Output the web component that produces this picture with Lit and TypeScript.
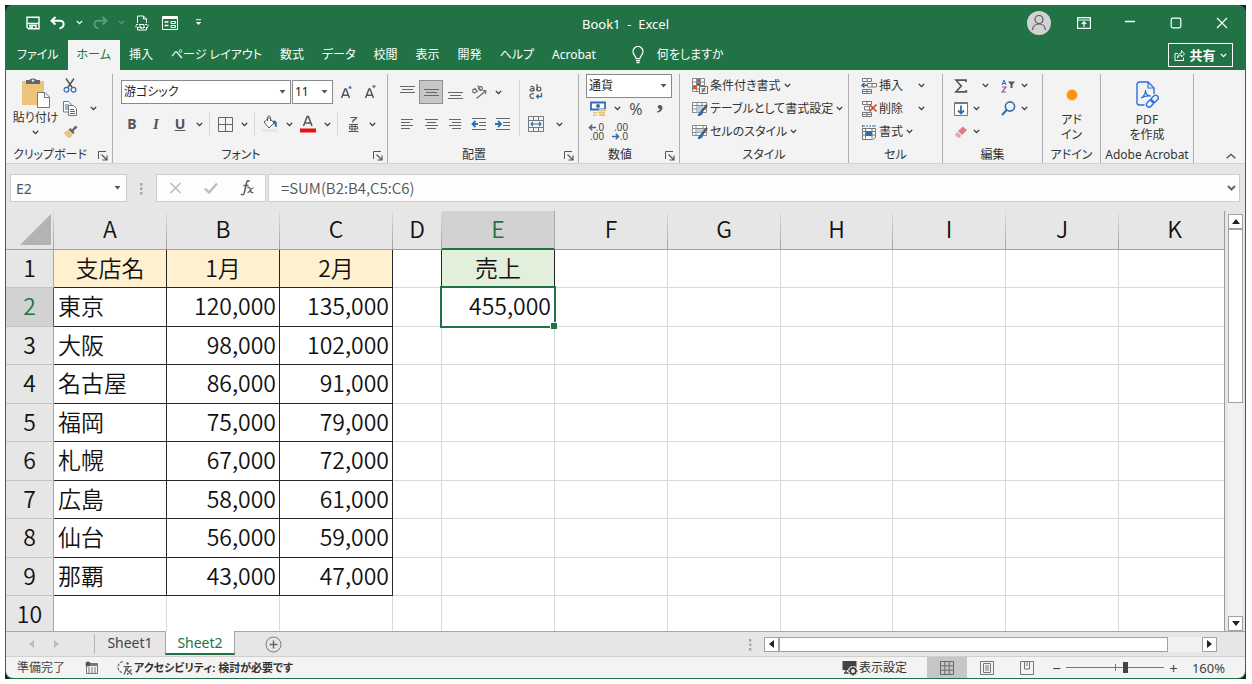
import { LitElement, html, svg, css, nothing, TemplateResult } from "lit";
import { customElement, property } from "lit/decorators.js";
import { classMap } from "lit/directives/class-map.js";

const B = "#2f6fb0";

const draw = (w: number, h: number, body: unknown) =>
  html`<svg width=${w} height=${h} viewBox="0 0 ${w} ${h}" fill="none" aria-hidden="true">${body}</svg>`;

const lines = (rows: number[][], colour = "#666") =>
  rows.map(([x1, x2, y]) => svg`<path d="M${x1} ${y}.5H${x2}" stroke=${colour}/>`);

const icons: Record<string, TemplateResult> = {
  chevron: draw(7, 5, svg`<path d="M.8 .9 3.5 3.6 6.2 .9" stroke="currentColor" stroke-width="1.3"/>`),
  arrow: draw(7, 4, svg`<path d="M.5 0h6L3.500 3.500z" fill="#555"/>`),
  save: draw(14, 14, svg`<path d="M1 1.200h12v11.600H2.500L1 11.300z" stroke="#fff" stroke-width="1.400"/><path d="M1.500 7.500h11M4 13V9.500h6V13" stroke="#fff" stroke-width="1.400"/><path d="M5 10.500h2V13H5z" fill="#fff"/>`),
  undo: draw(16, 14, svg`<path d="M5.500 1 1.500 4.700l4 3.800M2 4.700h7.500c5.500 0 5.500 6.300 0 7.800" stroke="#fff" stroke-width="2"/>`),
  redo: draw(16, 14, svg`<path d="m10.500 1 4 3.700-4 3.800M14 4.700H6.500C1 4.700 1 11 6.500 12.500" stroke="#5b9b78" stroke-width="2"/>`),
  print: draw(14, 16, svg`<path d="M2.500 8V1h6l3 3v4M8.500 1v3h3M2.500 13v2h9v-2" stroke="#fff"/><path d="M1 9.500h12v3H1z" stroke="#fff" stroke-dasharray="2 1"/><path d="M5 9.500h4v3.500H5z" stroke="#fff"/>`),
  form: draw(16, 14, svg`<path d="M.5.5h15v13H.5z" stroke="#fff"/><path d="M1 1h14v2H1z" fill="#fff"/><path d="M2.500 6h4M2.500 9.500h4" stroke="#fff" stroke-width="1.300"/><path d="M9 5.500h4.500v2H9zM9 9.500h4.500v2H9z" stroke="#fff"/>`),
  customize: draw(7, 7, svg`<path d="M1 .700h5" stroke="#fff"/><path d="M.8 3h5.400L3.500 6z" fill="#fff"/>`),
  person: draw(24, 24, svg`<circle cx="12" cy="12" r="12" fill="#d2d2d2"/><circle cx="12" cy="8.500" r="4" stroke="#555" stroke-width="1.200"/><path d="M5.500 19c.5-8 12.500-8 13 0" stroke="#555" stroke-width="1.200"/>`),
  ribbonMode: draw(14, 12, svg`<path d="M.6.600h12.800v10.800H.6zM.6 3h12.800M7 10V5M4.800 7 7 4.800 9.200 7" stroke="#fff" stroke-width="1.200"/>`),
  minimize: draw(12, 12, svg`<path d="M1 4.500h10" stroke="#fff" stroke-width="1.300"/>`),
  maximize: draw(12, 12, svg`<rect x="1.200" y="1.200" width="9.600" height="9.600" rx="1.500" stroke="#fff" stroke-width="1.200"/>`),
  close: draw(12, 12, svg`<path d="m1 1 10 10M11 1 1 11" stroke="#fff" stroke-width="1.200"/>`),
  bulb: draw(12, 18, svg`<path d="M4 12.500c0-2.500-3-3.500-3-7a5 5 0 0 1 10 0c0 3.500-3 4.500-3 7z" stroke="#fff" stroke-width="1.200"/><path d="M4 14.500h4M4.500 16.500h3" stroke="#fff" stroke-width="1.300"/>`),
  share: draw(11, 12, svg`<path d="M4 4.500H1v7h8.500V8.500" stroke="#fff"/><path d="M3.500 9c.2-3 1.700-5 4-5V1.500L10.500 5l-3 3V6C6 6 4.500 7 3.500 9z" stroke="#fff" stroke-width=".9"/>`),
  paste: draw(28, 30, svg`<path d="M0 3h22v24H0z" fill="#edc379"/><path d="M4 2h3.500C8 0 14 0 14.500 2H18v4H4z" fill="#666"/><circle cx="11" cy="2.600" r="1.200" fill="#f3f3f3"/><path d="M15.500 14.500h7.500l4.500 4.500v10.500h-12z" fill="#fff" stroke="#777"/><path d="M22.500 14.500v5h5" stroke="#777"/>`),
  cut: draw(14, 15, svg`<path d="M3 .500 9.500 10M11 .500 4.500 10" stroke="#555" stroke-width="1.500"/><circle cx="3.500" cy="11.700" r="2.400" stroke="${B}" stroke-width="1.200"/><circle cx="10.500" cy="11.700" r="2.400" stroke="${B}" stroke-width="1.200"/>`),
  copy: draw(14, 15, svg`<path d="M.5.500h5l2.500 2.500v8H.5z" fill="#fff" stroke="#777"/><path d="M2 4h4M2 6h4M2 8h4" stroke="${B}"/><path d="M5.500 4.500h5l3 3v7h-8z" fill="#fff" stroke="#777"/><path d="M7 8.500h4M7 10.500h5M7 12.500h5" stroke="${B}"/>`),
  brush: draw(15, 14, svg`<path d="m1 7.500 4-2.500 4.500 4.500L7 13.500c-2.500-1-5-3-6-6z" fill="#edc379"/><path d="m5.500 4.500 2-1.500L9 4.500 12.500.500 14.500 2.500 10.500 6l1 1.500-1.500 1.500z" fill="#666"/>`),
  border: draw(15, 15, svg`<path d="M.5.500h14v14H.5zM7.500.500v14M.5 7.500h14" stroke="#666"/>`),
  fill: draw(18, 18, svg`<path d="m3 7 5-4.500L13 8l-5 5z" fill="#fff" stroke="#555"/><path d="M6.500 6V2.500C6.500.500 9.500.500 9.500 2.500V6" stroke="#555"/><path d="M12.500 6c3-.5 3.500 2 2.500 6-1-1.500-1-3-2.500-6z" fill="${B}" stroke="${B}"/><path d="M1 14h16v3H1z" fill="#dff0d8"/>`),
  fontColor: draw(18, 18, svg`<path d="M4.500 11 8.200 1.500h1.200L13 11M5.800 8h6" stroke="#555" stroke-width="1.500"/><path d="M1 13.500h16v4H1z" fill="#e8110f"/>`),
  ruby: draw(11, 16, svg`<path d="M2.500 1.500h6L6 4.500M5.500 3.500 4.500 6.500" stroke="#555" stroke-width="1.200"/><path d="M1 8.500h9M.5 15.500h10M4 8.500v7M7 8.500v7M1.500 10.500v2.500h8v-2.500z" stroke="#555"/>`),
  grow: draw(14, 14, svg`<path d="M1.500 13 5 4h1l3.500 9M2.800 10.200h5.400" stroke="#555" stroke-width="1.500"/><path d="M8 3.500 10 .500l2 3z" fill="${B}"/>`),
  shrink: draw(14, 14, svg`<path d="M1.500 13 5 4h1l3.500 9M2.800 10.200h5.400" stroke="#555" stroke-width="1.500"/><path d="M8 .500h4l-2 3z" fill="${B}"/>`),
  alignTop: draw(15, 15, lines([[0, 15, 1], [2, 13, 4], [0, 15, 7]])),
  alignMiddle: draw(15, 15, lines([[0, 15, 4], [2, 13, 7], [0, 15, 10]])),
  alignBottom: draw(15, 15, lines([[0, 15, 7], [2, 13, 10], [0, 15, 13]])),
  alignLeft: draw(12, 12, lines([[0, 12, 1], [0, 9, 4], [0, 12, 7], [0, 9, 10]])),
  alignCenter: draw(13, 12, lines([[0, 13, 1], [2, 11, 4], [0, 13, 7], [2, 11, 10]])),
  alignRight: draw(12, 12, lines([[0, 12, 1], [3, 12, 4], [0, 12, 7], [3, 12, 10]])),
  orient: draw(16, 16, svg`<g stroke="#666" stroke-width="1.100"><circle cx="3.500" cy="7" r="1.900"/><path d="m3.500 4 3.200 4M6.500 1.500l3.500 5.200"/><circle cx="9.500" cy="4.500" r="1.900"/><path d="m5.500 14.500 9-7.500M11.500 6.500l3.300.2-.3 3.500"/></g>`),
  wrap: draw(14, 16, svg`<g stroke="#555" stroke-width="1.200"><path d="M1.500 3c1-.8 3.500-.8 3.500 1v3.200M5 4.700C3 4.500 1 4.700 1 6s2.500 1.500 4 0M8 0v7.200"/><circle cx="10" cy="4.900" r="1.900"/><path d="M5 10C2.500 8.800 1 10.500 1 12c0 1.700 1.500 3.200 4 2"/></g><path d="M12.500 9v3.500H7.500M9.500 10.500l-2 2 2 2" stroke="${B}" stroke-width="1.300"/>`),
  outdent: draw(16, 14, svg`${lines([[1, 15, 1], [8, 15, 5], [8, 15, 8], [1, 15, 12]])}<path d="M7 7H2M4.500 4 1.500 7l3 3" stroke="${B}" stroke-width="1.800"/>`),
  indent: draw(16, 14, svg`${lines([[1, 15, 1], [8, 15, 5], [8, 15, 8], [1, 15, 12]])}<path d="M0 7h5M3 4l3 3-3 3" stroke="${B}" stroke-width="1.800"/>`),
  merge: draw(16, 16, svg`<path d="M.5.500h15v15H.5zM.5 4.500h15M.5 11.500h15M5.500.500v4M10.500.500v4M5.500 11.500v4M10.500 11.500v4" stroke="#777"/><path d="M3 8h10M5 6 3 8l2 2M11 6l2 2-2 2" stroke="${B}" stroke-width="1.200"/>`),
  currency: draw(17, 16, svg`<path d="M1 1.500h14v7H1z" fill="#fff" stroke="${B}" stroke-width="1.800"/><circle cx="8" cy="5" r="2" fill="${B}"/><path d="M9 8h7v2H9zM8 10.500h7v2H8zM9 13h6v2H9zM3 11h4v1.500H3zM3 13.500h4V15H3z" fill="#edc379"/>`),
  toLeft: draw(8, 7, svg`<path d="M8 3.500H2M4.200.800 1.500 3.500l2.700 2.700" stroke="${B}" stroke-width="1.600"/>`),
  toRight: draw(8, 7, svg`<path d="M0 3.500h6M3.800.800l2.700 2.700-2.700 2.700" stroke="${B}" stroke-width="1.600"/>`),
  condition: draw(16, 16, svg`<path d="M.5.500h12v13H.5zM.5 4h12M.5 7.500h12M.5 11h12M4.500.500v13M8.500.500v13" fill="#fff" stroke="#888"/><path d="M5 1h3v3H5zM1 8h4v3H1z" fill="#d65532"/><path d="M5 4.500h3v3H5z" fill="${B}"/><path d="M7.500 8.500h8v7h-8z" fill="#fff" stroke="#666"/><path d="M9.500 11h4M9.500 13h4M13 9.500l-3 5" stroke="#555"/>`),
  tableFormat: draw(16, 16, svg`<path d="M.5 1.500h14v10H.5zM.5 4.500h14M.5 8h14M5 1.500v10M10 1.500v10" fill="#fff" stroke="#888"/><path d="M5 5h5v3H5zM5 8.500h4v3H5z" fill="#b7d1ea"/><path d="M15 4 9 11.500" stroke="#555" stroke-width="2.200"/><path d="M9.500 10c-2 .3-3 2-4 5 3 .5 5-1 5.700-3.500z" fill="${B}"/>`),
  cellStyle: draw(16, 16, svg`<path d="M.5 1.500h14v10H.5zM.5 4.500h14M.5 8.500h14M4 1.500v10M11 1.500v10" fill="#fff" stroke="#888"/><path d="M4.500 5h6v3.500h-6z" fill="#b7d1ea"/><path d="M15 4 9 11.500" stroke="#555" stroke-width="2.200"/><path d="M9.500 10c-2 .3-3 2-4 5 3 .5 5-1 5.700-3.500z" fill="${B}"/>`),
  insert: draw(16, 16, svg`<path d="M1.500.500h9v3h-9zM6 .500v3M1.500 11.500h9v4h-9zM1.500 13.500h9M6 11.500v4M6.500 5.500h9v3.500h-9zM11 5.500v3.500" fill="#fff" stroke="#777"/><path d="M7 7.300H1.500M3.500 5 1 7.300l2.500 2.200" stroke="${B}" stroke-width="1.500"/>`),
  remove: draw(16, 16, svg`<path d="M1.500.500h9v3h-9zM6 .500v3M1.500 11.500h9v4h-9zM1.500 13.500h9M6 11.500v4M3.500 5.500h5v3.500h-5z" fill="#fff" stroke="#777"/><path d="m8.500 3.500 7 7M15.500 3.500l-7 7" stroke="#d04a23" stroke-width="1.700"/>`),
  format: draw(16, 16, svg`<path d="M1.500 1v2M14 1v2M2 2h12" stroke="${B}" stroke-dasharray="2 1"/><path d="M1.500 4.500h13v9l-3 2h-10zM1.500 7.500h13M1.500 11h13M4.500 4.500v10M11 4.500v10" fill="#fff" stroke="#777"/><path d="M5 7.500h6V12H5z" fill="${B}"/>`),
  sum: draw(14, 14, svg`<path d="M12 3V1.200H2L7.200 7 2 12.800h10.300V11" stroke="#555" stroke-width="1.700"/>`),
  sort: draw(15, 14, svg`<path d="M1 6 3 1l2 5M1.600 4.500h2.800" stroke="${B}"/><path d="M1 8h4l-4 5h4" stroke="#8a4fa8" stroke-width="1.200"/><path d="M7 2.500h7l-2.500 3V9h-2V5.500z" fill="#555"/>`),
  fillDown: draw(14, 14, svg`<path d="M.5.500h13v13H.5z" fill="#fff" stroke="#777"/><path d="M.5 1.500h13" stroke="#777"/><path d="M7 3.500v8M4 8.500l3 3 3-3" stroke="${B}" stroke-width="1.800"/>`),
  find: draw(15, 15, svg`<circle cx="9" cy="5.500" r="4.600" stroke="${B}" stroke-width="1.600"/><path d="M5.700 9 1 14" stroke="${B}" stroke-width="2"/>`),
  eraser: draw(14, 14, svg`<path d="M9 1.500 13 5l-5 5-4-4z" fill="#e3798d"/><path d="m3.300 6.700 4 4-1.800 2H3.800L1 10z" fill="#eaa0ae"/>`),
  dot: draw(14, 14, svg`<circle cx="7" cy="7" r="5.800" fill="#ffc46b"/><circle cx="7" cy="7" r="5" fill="#ff9311"/>`),
  pdf: draw(26, 28, svg`<g stroke="#2b6be4" stroke-width="1.400"><path d="M10.500 24H5.500C4 24 3 23 3 21.500v-18C3 2 4 1 5.500 1H14l6 6v6"/><path d="M14 1v6h6" stroke-width="1.200"/><path d="M7 17c3.500-2 4.500-5 4.500-8 0 4 2 6 5.500 6-3.500-.5-6.500 0-10 2z" stroke-width="1.100"/><g transform="rotate(-45 18.500 20)"><rect x="11" y="17.400" width="8" height="5.200" rx="2.600"/><rect x="17.500" y="17.400" width="8" height="5.200" rx="2.600"/></g></g>`),
  launcher: draw(10, 10, svg`<path d="M.5 8V.500H8" stroke="#555"/><path d="m3.500 3.500 5 5M9 4.500V9H4.500" stroke="#555" stroke-width="1.200"/>`),
  collapse: draw(10, 6, svg`<path d="m.7 5.300 4.300-4 4.300 4" stroke="#444" stroke-width="1.200"/>`),
  grip: draw(3, 13, svg`<path d="M0 1h2.400v2.400H0zM0 5.500h2.400v2.400H0zM0 10h2.400v2.400H0z" fill="#a5a5a5"/>`),
  cancel: draw(13, 12, svg`<path d="m1.500 1 10 10M11.500 1l-10 10" stroke="#bdbdbd" stroke-width="1.600"/>`),
  accept: draw(14, 12, svg`<path d="m1 6.500 4 4L13 1.500" stroke="#bdbdbd" stroke-width="2.400"/>`),
  fx: draw(15, 18, svg`<path d="M9.500 2.500C8.500 1 7 1.500 6.500 4L4.500 13c-.5 3-2 3.500-3.500 2M3.500 6.500h5" stroke="#5a5a5a" stroke-width="1.500"/><path d="M7.500 9c2-1.500 2.500 0 3 2.200s1 3.300 2.800 2M13.500 8.800c-2-.8-4 5.500-6 4.700" stroke="#5a5a5a" stroke-width="1.200"/>`),
  expand: draw(9, 6, svg`<path d="m1 1 3.500 3.500L8 1" stroke="#666" stroke-width="2"/>`),
  up: draw(8, 5, svg`<path d="M0 5h8L4 0z" fill="#222"/>`),
  down: draw(8, 5, svg`<path d="M0 0h8L4 5z" fill="#222"/>`),
  left: draw(5, 8, svg`<path d="M5 0v8L0 4z" fill="currentColor"/>`),
  right: draw(5, 8, svg`<path d="M0 0v8l5-4z" fill="currentColor"/>`),
  corner: draw(31, 31, svg`<path d="M31 0v31H0z" fill="#b3b3b3"/>`),
  add: draw(17, 17, svg`<circle cx="8.500" cy="8.500" r="7.500" stroke="#777"/><path d="M8.500 4.500v8M4.500 8.500h8" stroke="#666" stroke-width="1.400"/>`),
  macro: draw(13, 13, svg`<path d="M1.500 2.500h11v10h-11z" stroke="#777"/><path d="M5 3h7v2H5z" fill="#777"/><path d="M3 7h2M6 7h2M9 7h2M3 9h2M6 9h2M9 9h2M3 11h2M6 11h2M9 11h2" stroke="#777"/><circle cx="3" cy="3" r="2.500" fill="#555"/>`),
  access: draw(17, 15, svg`<path d="M6 1.500C-.5 3-.5 11 5 12.500" stroke="#666" stroke-width="1.200" stroke-dasharray="3 1.200"/><circle cx="10.500" cy="3.500" r="1.200" fill="#555"/><path d="M6.500 6.500h8M9 6.500v3.500l-2 4.500M12 6.500 9.500 10M10 10l5 4.500M14.500 9.500 10 14.500" stroke="#555" stroke-width="1.200"/>`),
  display: draw(17, 16, svg`<path d="M1.500 1h14v9h-14z" fill="#444"/><path d="M3 13h5M5 10v3" stroke="#444" stroke-width="1.500"/><circle cx="12" cy="11" r="5" fill="#f3f3f3"/><circle cx="12" cy="11" r="2.800" stroke="#444" stroke-width="1.700"/><path d="M12 6.500v2M12 13.500v2M7.500 11h2M14.500 11h2M9 8l1 1M14 13l1 1M15 8l-1 1M10 13l-1 1" stroke="#444" stroke-width="1.400"/>`),
  viewNormal: draw(14, 14, svg`<path d="M.5.500h13v13H.5zM.5 4.800h13M.5 9.200h13M4.800.500v13M9.200.500v13" stroke="#6a6a6a"/>`),
  viewPage: draw(14, 14, svg`<path d="M.5.500h13v13H.5zM3.500 2.500h7v9h-7zM5 5h4M5 7h4M5 9h4" stroke="#777"/>`),
  viewBreak: draw(14, 14, svg`<path d="M.5.500h13v13H.5zM4.500.500V8h5V.500M7 .500V5" stroke="#777"/>`),
};

const base = css`
  * { box-sizing: border-box; }
  svg { display: block; flex: none; }
  button, select, input {
    margin: 0; padding: 0; border: 0; background: none; border-radius: 0;
    color: inherit; font: inherit; font-feature-settings: inherit; appearance: none; outline: none;
  }
  button { display: flex; align-items: center; justify-content: center; flex: none; white-space: nowrap; }
`;

@customElement("title-area")
class TitleArea extends LitElement {
  static styles = [base, css`
    :host { display: block; background: #217346; color: #fff; font-size: 12px; line-height: 16px; }
    .bar { display: grid; grid-template-columns: 1fr auto 1fr; height: 35px; align-items: center; }
    .quick { display: flex; align-items: center; padding-left: 16px; }
    .slot { width: 22px; height: 24px; }
    .slot.wide { width: 28px; }
    .drop { width: 14px; height: 24px; }
    .dim { color: #5b9b78; }
    .title { white-space: pre; padding-top: 3px; font-size: 13px; font-weight: 400; margin: 0; }
    .window { display: flex; align-items: center; justify-content: flex-end; }
    .window button { width: 46px; height: 28px; }
    .window .user { width: 24px; margin-right: 10px; }
    .tabs { display: flex; height: 30px; align-items: stretch; padding-left: 2px; }
    .tab { padding: 0 9px; color: #fff; text-decoration: none; display: flex; align-items: center; white-space: nowrap; }
    .tab.on { background: #f3f3f3; color: #217346; }
    .tell { margin-left: 27px; gap: 13px; }
    .share { margin: 3px 12px 3px auto; width: 65px; border: 1px solid #fff; font-weight: 700; font-size: 13px; gap: 4px; }
  `];

  render() {
    const tabs = ["ファイル", "ホーム", "挿入", "ページ レイアウト", "数式", "データ", "校閲", "表示", "開発", "ヘルプ", "Acrobat"];
    return html`
      <header class="bar">
        <div class="quick">
          <button class="slot" aria-label="上書き保存">${icons.save}</button>
          <button class="slot wide" aria-label="元に戻す">${icons.undo}</button>
          <button class="drop" aria-label="元に戻す一覧">${icons.chevron}</button>
          <button class="slot wide" aria-label="やり直し">${icons.redo}</button>
          <button class="drop dim" aria-label="やり直し一覧">${icons.chevron}</button>
          <button class="slot wide" aria-label="印刷プレビュー">${icons.print}</button>
          <button class="slot wide" aria-label="フォーム">${icons.form}</button>
          <button class="slot wide" aria-label="カスタマイズ">${icons.customize}</button>
        </div>
        <h1 class="title">Book1  -  Excel</h1>
        <div class="window">
          <button class="user" aria-label="アカウント">${icons.person}</button>
          <button aria-label="リボンの表示オプション">${icons.ribbonMode}</button>
          <button aria-label="最小化">${icons.minimize}</button>
          <button aria-label="最大化">${icons.maximize}</button>
          <button aria-label="閉じる">${icons.close}</button>
        </div>
      </header>
      <nav class="tabs">
        ${tabs.map((t, i) => html`<a href="#" class=${classMap({ tab: true, on: i === 1 })}>${t}</a>`)}
        <button class="tell">${icons.bulb}<span>何をしますか</span></button>
        <button class="share">${icons.share}<span>共有</span>${icons.chevron}</button>
      </nav>
    `;
  }
}

@customElement("ribbon-group")
class RibbonGroup extends LitElement {
  @property() label = "";
  @property({ type: Boolean }) launcher = false;
  static styles = [base, css`
    :host { display: grid; grid-template-rows: 69px 20px; border-right: 1px solid #b0b0b0; margin-top: 4px; min-width: 0; }
    .foot { display: flex; align-items: end; line-height: 16px; }
    .name { flex: 1; text-align: center; white-space: nowrap; }
    .open { width: 18px; height: 14px; }
  `];
  render() {
    return html`<slot></slot>
      <div class="foot"><span class="name">${this.label}</span>
      ${this.launcher ? html`<button class="open" aria-label="${this.label}の設定">${icons.launcher}</button>` : nothing}</div>`;
  }
}

@customElement("ribbon-bar")
class RibbonBar extends LitElement {
  static styles = [base, css`
    :host {
      display: grid; background: #f3f3f3; color: #333; font-size: 12px; line-height: 16px; height: 94px;
      grid-template-columns: 107px 275px 191px 101px 169px 94px 100px 58px 93px 1fr;
      border-bottom: 1px solid #d0d0d0;
    }
    .row { display: flex; align-items: center; height: 23px; }
    .two { display: flex; flex-direction: column; gap: 8px; padding: 6px 0 0 7px; }
    .two .row { height: 24px; }
    .two.flush { padding-left: 0; }
    .three { display: flex; flex-direction: column; padding-left: 7px; }
    .wide { padding-left: 12px; }
    .ic { width: 24px; height: 24px; }
    .ch { width: 14px; height: 20px; }
    .ch.far { width: 22px; }
    .on { background: #c6c6c6; border: 1px solid #8f8f8f; }
    .sep { width: 1px; height: 22px; margin: 0 3px; background: #d6d6d6; flex: none; }
    .sep.tall { height: 56px; margin: 6px 4px 0; }
    .cols { display: flex; }
    .bold { font-weight: 700; font-size: 14px; color: #555; }
    .italic { font: italic 700 15px/16px "Liberation Serif", serif; color: #555; }
    .under { font-weight: 700; text-decoration: underline; font-size: 14px; color: #555; }
    .pick { display: grid; align-items: center; background: #fff; border: 1px solid #8a8a8a; height: 24px; color: #222; }
    .pick select { grid-area: 1 / 1; width: 100%; padding-left: 2px; }
    .pick svg { grid-area: 1 / 1; justify-self: end; margin-right: 4px; pointer-events: none; }
    .family { width: 170px; }
    .size { width: 41px; margin-right: 2px; }
    .size, .pick.family { margin-left: 1px; }
    .number { width: 86px; }
    .item { gap: 2px; height: 22px; }
    .item .tail { margin-left: 1px; }
    .item .tail.far { margin-left: 13px; }
    .clip { display: grid; grid-template-columns: 45px 24px 1fr; padding-left: 7px; }
    .big { flex-direction: column; justify-content: start; padding-top: 4px; line-height: 15px; }
    .big .cap { margin-top: 2px; }
    .big .drop { margin-top: 5px; }
    .mid { display: flex; align-items: center; }
    .dec { font: 10px/9px "Liberation Sans", sans-serif; flex-direction: column; color: #444; align-items: end; width: 24px; padding-right: 6px; }
    .dec span { display: flex; align-items: center; }
    .percent { font-size: 16px; color: #555; }
    .comma { font: 700 26px/24px "Liberation Serif", serif; color: #555; width: 24px; height: 24px; padding-bottom: 16px; }
    .edit { display: grid; grid-template-columns: 24px 24px 22px 10px; grid-auto-rows: 23px; align-items: center; padding-left: 6px; }
    .edit button { width: auto; }
    .edit .near { justify-content: start; }
    .addin { width: 100%; }
    .addin .pic { height: 34px; display: flex; align-items: center; }
    .end { display: flex; justify-content: flex-end; align-items: end; padding: 0 6px 2px 0; }
    .end button { width: 16px; height: 10px; }
  `];

  private ic(name: string, label: string, on = false) {
    return html`<button class=${classMap({ ic: true, on })} aria-label=${label}>${icons[name]}</button>`;
  }
  private ch(far = false) {
    return html`<button class=${classMap({ ch: true, far })} aria-label="その他">${icons.chevron}</button>`;
  }
  private item(icon: string, text: string, far = false) {
    return html`<div class="row"><button class="item">${icons[icon]}<span>${text}</span><span class=${classMap({ tail: true, far })}>${icons.chevron}</span></button></div>`;
  }

  render() {
    return html`
      <ribbon-group label="クリップボード" launcher>
        <div class="clip">
          <button class="big">${icons.paste}<span class="cap">貼り付け</span><span class="drop">${icons.chevron}</span></button>
          <div>
            <div class="row">${this.ic("cut", "切り取り")}</div>
            <div class="row">${this.ic("copy", "コピー")}</div>
            <div class="row">${this.ic("brush", "書式のコピー")}</div>
          </div>
          <div class="mid">${this.ch(true)}</div>
        </div>
      </ribbon-group>
      <ribbon-group label="フォント" launcher>
        <div class="two">
          <div class="row">
            <label class="pick family"><select aria-label="フォント名"><option>游ゴシック</option></select>${icons.arrow}</label>
            <label class="pick size"><select aria-label="フォント サイズ"><option>11</option></select>${icons.arrow}</label>
            ${this.ic("grow", "拡大")}${this.ic("shrink", "縮小")}
          </div>
          <div class="row">
            <button class="ic bold">B</button><button class="ic italic">I</button><button class="ic under">U</button>${this.ch()}
            <span class="sep"></span>${this.ic("border", "罫線")}${this.ch()}
            <span class="sep"></span>${this.ic("fill", "塗りつぶしの色")}${this.ch()}${this.ic("fontColor", "フォントの色")}${this.ch()}
            <span class="sep"></span>${this.ic("ruby", "ふりがな")}${this.ch()}
          </div>
        </div>
      </ribbon-group>
      <ribbon-group label="配置" launcher>
        <div class="cols">
          <div class="two">
            <div class="row">${this.ic("alignTop", "上揃え")}${this.ic("alignMiddle", "上下中央揃え", true)}${this.ic("alignBottom", "下揃え")}${this.ic("orient", "方向")}${this.ch()}</div>
            <div class="row">${this.ic("alignLeft", "左揃え")}${this.ic("alignCenter", "中央揃え")}${this.ic("alignRight", "右揃え")}${this.ic("outdent", "インデントを減らす")}${this.ic("indent", "インデントを増やす")}</div>
          </div>
          <span class="sep tall"></span>
          <div class="two flush">
            <div class="row">${this.ic("wrap", "折り返し")}</div>
            <div class="row">${this.ic("merge", "セルを結合")}${this.ch(true)}</div>
          </div>
        </div>
      </ribbon-group>
      <ribbon-group label="数値" launcher>
        <div class="three">
          <div class="row"><label class="pick number"><select aria-label="表示形式"><option>通貨</option></select>${icons.arrow}</label></div>
          <div class="row">${this.ic("currency", "通貨")}${this.ch()}<button class="ic percent">%</button><button class="comma">,</button></div>
          <div class="row"><button class="dec"><span>${icons.toLeft}.0</span><span>.00</span></button><button class="dec"><span>.00</span><span>${icons.toRight}.0</span></button></div>
        </div>
      </ribbon-group>
      <ribbon-group label="スタイル">
        <div class="three wide">
          ${this.item("condition", "条件付き書式")}${this.item("tableFormat", "テーブルとして書式設定")}${this.item("cellStyle", "セルのスタイル")}
        </div>
      </ribbon-group>
      <ribbon-group label="セル">
        <div class="three wide">
          ${this.item("insert", "挿入", true)}${this.item("remove", "削除", true)}${this.item("format", "書式")}
        </div>
      </ribbon-group>
      <ribbon-group label="編集">
        <div class="edit">
          <button aria-label="合計">${icons.sum}</button><button aria-label="合計一覧">${icons.chevron}</button>
          <button aria-label="並べ替え">${icons.sort}</button><button aria-label="並べ替え一覧">${icons.chevron}</button>
          <button aria-label="フィル">${icons.fillDown}</button><button class="near" aria-label="フィル一覧">${icons.chevron}</button>
          <button aria-label="検索">${icons.find}</button><button aria-label="検索一覧">${icons.chevron}</button>
          <button aria-label="クリア">${icons.eraser}</button><button class="near" aria-label="クリア一覧">${icons.chevron}</button>
        </div>
      </ribbon-group>
      <ribbon-group label="アドイン">
        <button class="big addin"><span class="pic">${icons.dot}</span><span>アド<br />イン</span></button>
      </ribbon-group>
      <ribbon-group label="Adobe Acrobat">
        <button class="big addin"><span class="pic">${icons.pdf}</span><span>PDF<br />を作成</span></button>
      </ribbon-group>
      <div class="end"><button aria-label="リボンを折りたたむ">${icons.collapse}</button></div>
    `;
  }
}

@customElement("formula-bar")
class FormulaBar extends LitElement {
  static styles = [base, css`
    :host { display: flex; align-items: start; background: #e6e6e6; height: 47px; padding: 10px 5px 0 4px; color: #555; font-size: 14px; }
    .box { display: flex; align-items: center; height: 28px; background: #fdfdfd; border: 1px solid #cdcdcd; }
    .name { width: 117px; padding: 0 5px; }
    .name input { flex: 1; min-width: 0; }
    .grip { height: 28px; width: 29px; display: grid; place-items: center; }
    .tools { width: 110px; margin-right: 2px; }
    .tools button { width: 36px; height: 26px; }
    .formula { flex: 1; padding: 0 3px 0 12px; }
    .formula input { flex: 1; min-width: 0; font-family: "Noto Sans CJK JP", sans-serif; font-size: 15px; line-height: 20px; font-weight: 350; }
  `];
  render() {
    return html`
      <div class="box name"><input aria-label="名前ボックス" .value=${"E2"} />${icons.arrow}</div>
      <span class="grip">${icons.grip}</span>
      <div class="box tools">
        <button aria-label="キャンセル">${icons.cancel}</button><button aria-label="入力">${icons.accept}</button><button aria-label="関数の挿入">${icons.fx}</button>
      </div>
      <div class="box formula"><input aria-label="数式" .value=${"=SUM(B2:B4,C5:C6)"} /><button aria-label="展開">${icons.expand}</button></div>
    `;
  }
}

const columns = ["A", "B", "C", "D", "E", "F", "G", "H", "I", "J", "K"];
const data = [
  ["支店名", "1月", "2月", "", "売上"],
  ["東京", "120,000", "135,000", "", "455,000"],
  ["大阪", "98,000", "102,000"],
  ["名古屋", "86,000", "91,000"],
  ["福岡", "75,000", "79,000"],
  ["札幌", "67,000", "72,000"],
  ["広島", "58,000", "61,000"],
  ["仙台", "56,000", "59,000"],
  ["那覇", "43,000", "47,000"],
  [],
];

@customElement("sheet-grid")
class SheetGrid extends LitElement {
  static styles = [base, css`
    :host { display: flex; flex: 1; min-height: 0; background: #e6e6e6; }
    .view { flex: 1; min-width: 0; overflow: hidden; border-right: 1px solid #9a9a9a; background: #fff; }
    table { width: calc(100% + 7px); table-layout: fixed; border-collapse: separate; border-spacing: 0;
      font: 350 23px/30px "Noto Sans CJK JP", sans-serif; font-feature-settings: normal; color: #111; }
    .rows { width: 48px; }
    .std { width: 113px; }
    .slim { width: 49px; }
    .snug { width: 112px; }
    th, td { padding: 0 0 4px; overflow: visible; white-space: nowrap; }
    th { font-weight: 350; background: #e6e6e6; text-align: center; border-bottom: 1px solid #c4c4c4; border-right: 1px solid #a6a6a6; }
    thead tr { height: 39px; }
    thead th { border-bottom-color: #9e9e9e; border-right: 1px solid; border-image: linear-gradient(#e0e0e0, #9e9e9e) 1; }
    .all { padding: 0 2px 1px 14px; }
    tbody tr { height: 39px; }
    tbody tr:nth-child(odd) { height: 38px; }
    td { border-right: 1px solid #d9d9d9; border-bottom: 1px solid #d9d9d9; }
    .framed { border-color: #262626; }
    .text { padding-left: 4px; }
    .num { text-align: right; padding-right: 3px; }
    .head { text-align: center; background: #fff0cf; }
    .total { background: #e2efda; }
    .edge { border-right-color: #262626; }
    th.chosen { background: #d2d2d2; color: #217346; }
    tbody th.chosen { border-right-color: #217346; }
    thead th.chosen { border-image: none; border-right-color: #aaa; border-bottom: 2px solid #217346; padding-bottom: 3px; }
    td.active { position: relative; }
    td.active::before { content: ""; position: absolute; inset: -2px -2px -2px -2px; border: 2px solid #217346; }
    td.active::after { content: ""; position: absolute; right: -3px; bottom: -3px; width: 6px; height: 6px; background: #217346; border: solid #fff; border-width: 1px 0 0 1px; }
    .scroll { width: 20px; padding: 3px 2px 0 3px; display: flex; flex-direction: column; }
    .scroll button { width: 15px; height: 15px; border: 1px solid #a2a2a2; background: #fff; }
    .track { flex: 1; background: #f1f1f1; display: flex; flex-direction: column; }
    .thumb { height: 45%; background: #fff; border: 1px solid #a2a2a2; }
  `];

  private cell(r: number, c: number) {
    const v = data[r][c] ?? "";
    const framed = r < 9 && c < 3;
    return html`<td class=${classMap({
      framed: framed || (r === 0 && c === 4),
      head: r === 0 && (c < 3 || c === 4),
      total: r === 0 && c === 4,
      text: r > 0 && c === 0,
      num: r > 0 && c > 0,
      edge: r === 0 && c === 3,
      active: r === 1 && c === 4,
    })}>${v}</td>`;
  }

  render() {
    return html`
      <div class="view">
        <table>
          <colgroup>
            <col class="rows" /><col class="std" /><col class="std" /><col class="std" /><col class="slim" /><col class="std" />
            <col class="std" /><col class="std" /><col class="snug" /><col class="std" /><col class="std" /><col />
          </colgroup>
          <thead>
            <tr><th class="all">${icons.corner}</th>${columns.map((c) => html`<th scope="col" class=${classMap({ chosen: c === "E" })}>${c}</th>`)}</tr>
          </thead>
          <tbody>
            ${data.map((_, r) => html`<tr><th scope="row" class=${classMap({ chosen: r === 1 })}>${r + 1}</th>${columns.map((_c, c) => this.cell(r, c))}</tr>`)}
          </tbody>
        </table>
      </div>
      <div class="scroll">
        <button aria-label="上へ">${icons.up}</button>
        <div class="track"><div class="thumb"></div></div>
        <button aria-label="下へ">${icons.down}</button>
      </div>
    `;
  }
}

@customElement("sheet-footer")
class SheetFooter extends LitElement {
  static styles = [base, css`
    :host { display: block; color: #444; font-size: 12px; line-height: 16px; }
    .tabs { display: flex; height: 25px; background: #e6e6e6; border-top: 1px solid #a6a6a6; }
    .nav { width: 25px; color: #bdbdbd; }
    .lead { width: 89px; padding-left: 13px; display: flex; border-right: 1px solid #b5b5b5; margin: 2px 0; }
    .sheet { width: 70px; font-size: 14px; height: 22px; }
    .sheet.on { background: #fff; color: #217346; border: solid #a6a6a6; border-width: 0 1px; border-bottom: 2px solid #217346; margin-top: -1px; padding-top: 1px; height: 24px; }
    .add { width: 77px; }
    .scroll { margin-left: auto; display: flex; align-items: center; width: 40%; min-width: 300px; padding-right: 28px; }
    .grip { width: 15px; flex: none; }
    .scroll button { width: 15px; height: 15px; border: 1px solid #a2a2a2; background: #fff; color: #222; }
    .track { flex: 1; height: 15px; background: #f1f1f1; }
    .thumb { width: 92%; height: 15px; background: #fff; border: 1px solid #a2a2a2; }
    .status { display: flex; align-items: center; height: 22px; background: #f3f3f3; border-top: 1px solid #cfcfcf; padding-left: 11px; }
    .macro { width: 52px; height: 20px; }
    .note { font-weight: 700; font-size: 11px; color: #333; }
    .right { margin-left: auto; display: flex; align-items: center; align-self: stretch; padding-right: 20px; }
    .settings { gap: 1px; margin-right: 20px; color: #333; }
    .view { width: 40px; align-self: stretch; }
    .view.on { background: #c6c6c6; }
    .step { width: 19px; font-size: 15px; }
    .zoom { width: 98px; height: 15px; background:
      linear-gradient(#777, #777) center / 1px 7px no-repeat,
      linear-gradient(#777, #777) center / 100% 1px no-repeat; }
    .zoom::-webkit-slider-thumb { appearance: none; width: 5px; height: 11px; background: #444; }
    .rate { width: 42px; text-align: right; font-size: 13px; }
  `];
  render() {
    return html`
      <div class="tabs">
        <div class="lead"><button class="nav" aria-label="前のシート">${icons.left}</button><button class="nav" aria-label="次のシート">${icons.right}</button></div>
        <button class="sheet">Sheet1</button><button class="sheet on">Sheet2</button>
        <button class="add" aria-label="新しいシート">${icons.add}</button>
        <div class="scroll">
          <span class="grip">${icons.grip}</span>
          <button aria-label="左へ">${icons.left}</button>
          <div class="track"><div class="thumb"></div></div>
          <button aria-label="右へ">${icons.right}</button>
        </div>
      </div>
      <div class="status">
        <span>準備完了</span>
        <button class="macro" aria-label="マクロの記録">${icons.macro}</button>
        <button class="note">${icons.access}<span>アクセシビリティ: 検討が必要です</span></button>
        <div class="right">
          <button class="settings">${icons.display}<span>表示設定</span></button>
          <button class="view on" aria-label="標準">${icons.viewNormal}</button>
          <button class="view" aria-label="ページ レイアウト">${icons.viewPage}</button>
          <button class="view" aria-label="改ページ プレビュー">${icons.viewBreak}</button>
          <button class="step" aria-label="縮小">−</button>
          <input class="zoom" type="range" aria-label="ズーム" min="0" max="100" .value=${"61"} />
          <button class="step" aria-label="拡大">+</button>
          <span class="rate">160%</span>
        </div>
      </div>
    `;
  }
}

@customElement("app-root")
class AppRoot extends LitElement {
  static styles = [base, css`
    :host { display: block; box-sizing: border-box; height: 100vh; padding: 5px 6px 5px 5px; background: #fff;
      font-family: "Noto Sans", "Noto Sans CJK JP", sans-serif; font-feature-settings: "palt"; }
    .desk { height: 100%; background: #16261d; }
    .window { height: 100%; display: flex; flex-direction: column; border: 1px solid #217346; border-top: 0; border-radius: 8px; overflow: hidden; background: #217346; }
  `];
  render() {
    return html`<div class="desk"><main class="window">
      <title-area></title-area><ribbon-bar></ribbon-bar><formula-bar></formula-bar><sheet-grid></sheet-grid><sheet-footer></sheet-footer>
    </main></div>`;
  }
}
